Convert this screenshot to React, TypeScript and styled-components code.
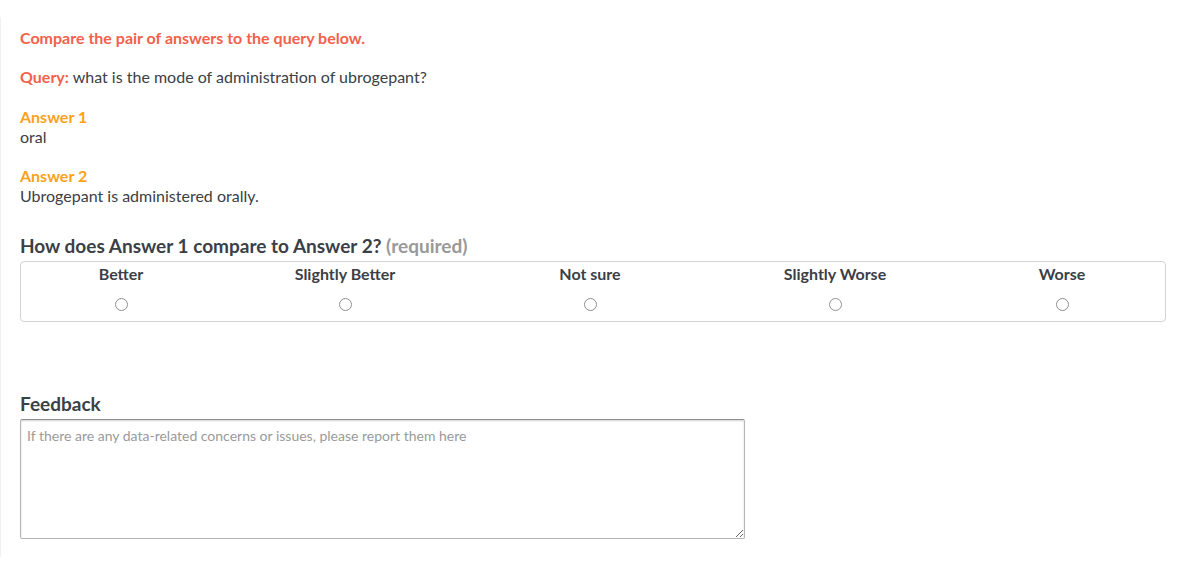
import React from "react";
import styled, { createGlobalStyle } from "styled-components";

const Global = createGlobalStyle`
  html, body { margin: 0; padding: 0; background: #fff; }
  body { font-family: Lato, "Open Sans", sans-serif; color: #3b4046; }
`;

const Page = styled.div`
  margin-top: 17px;
  height: 540px;
  box-sizing: border-box;
  border-left: 1px solid #f1f1f1;
  padding: 11px 18px 0 19px;
`;

const Block = styled.div<{ $gap?: number }>`
  margin-top: ${(p) => p.$gap ?? 0}px;
  font-size: 16px;
  line-height: 20px;
`;

const Title = styled.div`
  font-size: 16px;
  line-height: 20px;
  font-weight: 700;
  color: #f3614b;
`;

const Accent = styled.span`
  font-weight: 700;
  color: #f3614b;
`;

const Label = styled.div`
  font-weight: 700;
  color: #fba21c;
`;

const Value = styled.div`
  line-height: 19px;
`;

const Heading = styled.h2<{ $gap: number }>`
  margin: ${(p) => p.$gap}px 0 0;
  font-size: 19px;
  line-height: 24px;
  font-weight: 700;
  color: #3b4046;
`;

const Required = styled.span`
  color: #999;
`;

const Matrix = styled.div`
  margin-top: 3px;
  display: grid;
  grid-template-columns: 200fr 248fr 242fr 248fr 206fr;
  height: 61px;
  box-sizing: border-box;
  border: 1px solid #d3d3d3;
  border-radius: 4px;
`;

const Choice = styled.label`
  display: flex;
  flex-direction: column;
  align-items: center;
  padding-top: 2px;
`;

const ChoiceText = styled.span`
  font-size: 16px;
  font-weight: 700;
  line-height: 20px;
  color: #3b4046;
  margin-bottom: 14px;
`;

const Radio = styled.input`
  appearance: none;
  -webkit-appearance: none;
  width: 13px;
  height: 13px;
  margin: 0;
  border: 1px solid #909090;
  border-radius: 50%;
  background: #fff;
`;

const Feedback = styled.textarea`
  display: block;
  margin-top: 3px;
  width: 725px;
  height: 120px;
  box-sizing: border-box;
  border: 1px solid #b5b5b5;
  border-top-color: #8e8e8e;
  box-shadow: inset 0 1px 2px rgba(0, 0, 0, 0.18);
  border-radius: 2px;
  padding: 8px 6px;
  font-family: Lato, sans-serif;
  font-size: 14px;
  line-height: 16px;
  color: #333;
  &::placeholder {
    color: #9a9a9a;
  }
`;

const options = ["Better", "Slightly Better", "Not sure", "Slightly Worse", "Worse"];

export default function App() {
  return (
    <>
      <Global />
      <Page>
        <Title>Compare the pair of answers to the query below.</Title>
        <Block $gap={19}>
          <Accent>Query:</Accent> what is the mode of administration of ubrogepant?
        </Block>
        <Block $gap={20}>
          <Label>Answer 1</Label>
          <Value>oral</Value>
        </Block>
        <Block $gap={20}>
          <Label>Answer 2</Label>
          <Value>Ubrogepant is administered orally.</Value>
        </Block>
        <Heading $gap={29}>
          How does Answer 1 compare to Answer 2? <Required>(required)</Required>
        </Heading>
        <Matrix role="radiogroup">
          {options.map((o) => (
            <Choice key={o}>
              <ChoiceText>{o}</ChoiceText>
              <Radio type="radio" name="cmp" value={o} />
            </Choice>
          ))}
        </Matrix>
        <Heading $gap={70}>Feedback</Heading>
        <Feedback placeholder="If there are any data-related concerns or issues, please report them here" />
      </Page>
    </>
  );
}
